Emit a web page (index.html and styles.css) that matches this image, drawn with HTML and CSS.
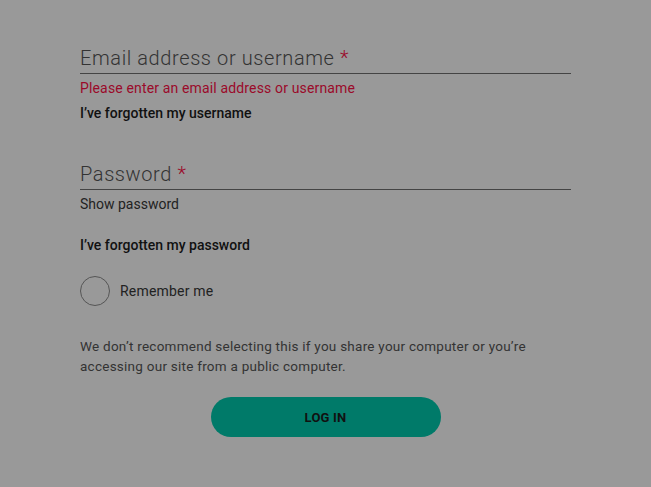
FILE: index.html
```html
<!DOCTYPE html>
<html>
<head>
<meta charset="utf-8">
<link rel="stylesheet" href="styles.css">
</head>
<body>
<form class="login">
  <div class="field">
    <label class="label">Email address or username <span class="req">*</span></label>
    <div class="rule"></div>
  </div>
  <p class="error">Please enter an email address or username</p>
  <a class="link">I’ve forgotten my username</a>

  <div class="field pw">
    <label class="label">Password <span class="req">*</span></label>
    <div class="rule"></div>
  </div>
  <a class="show">Show password</a>
  <a class="link forgot-pw">I’ve forgotten my password</a>

  <div class="remember">
    <span class="circle"></span>
    <span class="remember-text">Remember me</span>
  </div>

  <p class="note">We don’t recommend selecting this if you share your computer or you’re accessing our site from a public computer.</p>

  <div class="actions">
    <button type="button" class="btn">LOG IN</button>
  </div>
</form>
</body>
</html>
```

FILE: styles.css
```css
html, body {
  margin: 0;
  padding: 0;
  background: #999999;
  height: 100%;
}
body {
  font-family: Roboto, "Liberation Sans", sans-serif;
  color: #222;
}
.login {
  width: 491px;
  padding: 44px 0 0 80px;
  display: flex;
  flex-direction: column;
}
.field {
  display: flex;
  flex-direction: column;
}
.label {
  font-size: 20px;
  font-weight: 300;
  color: #333;
  line-height: 28px;
  letter-spacing: 0.6px;
}
.req {
  color: #9b0a2a;
}
.rule {
  height: 1px;
  background: #444;
  margin-top: 1px;
}
.error {
  margin: 6px 0 0;
  font-size: 14px;
  line-height: 16px;
  letter-spacing: 0.15px;
  color: #9b0a2a;
}
.link {
  margin-top: 9px;
  font-size: 14px;
  line-height: 16px;
  font-weight: 500;
  color: #111;
}
.pw {
  margin-top: 39px;
}
.show {
  margin-top: 6px;
  font-size: 14px;
  line-height: 16px;
  color: #222;
}
.forgot-pw {
  margin-top: 25px;
}
.remember {
  margin-top: 23px;
  display: flex;
  align-items: center;
  gap: 10px;
}
.circle {
  width: 28px;
  height: 28px;
  border: 1px solid #555;
  border-radius: 50%;
}
.remember-text {
  font-size: 14px;
  letter-spacing: 0.2px;
  color: #222;
}
.note {
  margin: 30px 0 0;
  font-size: 13.5px;
  line-height: 20px;
  letter-spacing: 0.25px;
  color: #333;
  width: 460px;
}
.actions {
  display: flex;
  justify-content: center;
  margin-top: 21px;
}
.btn {
  width: 230px;
  height: 40px;
  border: none;
  border-radius: 20px;
  background: #007a69;
  color: #111;
  font-family: Roboto, "Liberation Sans", sans-serif;
  font-weight: 700;
  font-size: 13px;
  letter-spacing: 0.2px;
}
```
